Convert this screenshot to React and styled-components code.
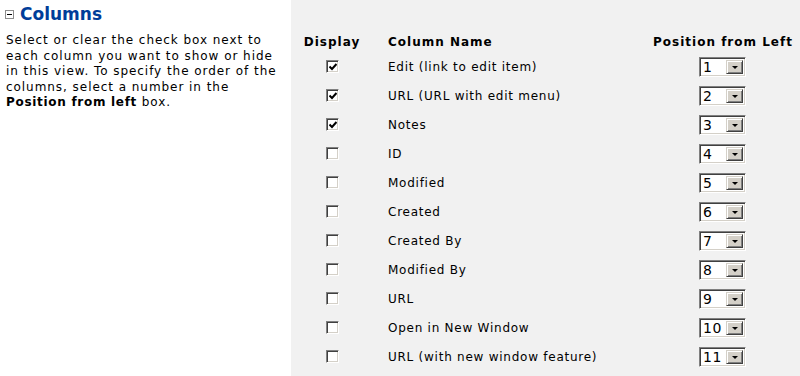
import React from "react";
import styled, { createGlobalStyle } from "styled-components";

const GlobalStyle = createGlobalStyle`
  html, body {
    margin: 0;
    padding: 0;
    background: #ffffff;
  }
  body {
    font-family: "DejaVu Sans", Verdana, sans-serif;
    font-size: 12px;
    color: #000;
  }
`;

const columns = [
  { name: "Edit (link to edit item)", checked: true },
  { name: "URL (URL with edit menu)", checked: true },
  { name: "Notes", checked: true },
  { name: "ID", checked: false },
  { name: "Modified", checked: false },
  { name: "Created", checked: false },
  { name: "Created By", checked: false },
  { name: "Modified By", checked: false },
  { name: "URL", checked: false },
  { name: "Open in New Window", checked: false },
  { name: "URL (with new window feature)", checked: false },
];

const Page = styled.div`
  display: flex;
  width: 800px;
  height: 376px;
  overflow: hidden;
`;

const Side = styled.div`
  width: 285px;
  flex-shrink: 0;
  padding: 4px 0 0 6px;
`;

const Heading = styled.div`
  display: flex;
  align-items: center;
  gap: 6px;
  margin-left: -1px;
  color: #003d99;
  font-size: 17px;
  font-weight: bold;
  line-height: 20px;
`;

const Toggle = styled.span`
  position: relative;
  width: 7px;
  height: 7px;
  border: 1px solid #8c8c8c;
  background: #fff;
  flex-shrink: 0;

  &::after {
    content: "";
    position: absolute;
    left: 1px;
    top: 3px;
    width: 5px;
    height: 1px;
    background: #000;
  }
`;

const Help = styled.p`
  margin: 9px 0 0;
  font-size: 12px;
  line-height: 15.5px;
  letter-spacing: 0.95px;
  white-space: nowrap;

  b {
    font-weight: bold;
    letter-spacing: 0.7px;
  }
`;

const Panel = styled.div`
  flex: 1;
  background: #f1f1f1;
  padding: 35px 7px 0 12px;
`;

const Grid = styled.div`
  display: grid;
  grid-template-columns: 58px 1fr 140px;
  grid-template-rows: 17px;
  column-gap: 27px;
  grid-auto-rows: 29px;
  align-items: center;
`;

const HeadCell = styled.div`
  font-weight: bold;
  letter-spacing: 1px;
  align-self: start;
  line-height: 15px;
  white-space: nowrap;
  text-align: ${(p) => p.$align || "left"};
`;

const Cell = styled.div`
  display: flex;
  justify-content: ${(p) => p.$justify || "flex-start"};
  align-items: center;
  letter-spacing: 0.75px;
  white-space: nowrap;
`;

const Box = styled.span`
  position: relative;
  box-sizing: border-box;
  width: 13px;
  height: 13px;
  background: #fff;
  border-top: 1px solid #808080;
  border-left: 1px solid #808080;
  border-right: 1px solid #fff;
  border-bottom: 1px solid #fff;
  box-shadow: inset 1px 1px 0 #404040, inset -1px -1px 0 #d4d0c8;

  svg {
    position: absolute;
    left: 2px;
    top: 2px;
  }
`;

const Select = styled.div`
  display: flex;
  box-sizing: border-box;
  width: 47px;
  height: 20px;
  margin-left: -1px;
  background: #fff;
  border-top: 1px solid #808080;
  border-left: 1px solid #808080;
  border-right: 1px solid #fff;
  border-bottom: 1px solid #fff;
  box-shadow: inset 1px 1px 0 #404040, inset -1px -1px 0 #d4d0c8;
  padding: 2px;
  font-size: 14px;
  letter-spacing: 0.5px;
`;

const Value = styled.span`
  flex: 1;
  line-height: 14px;
  padding-left: 1px;
`;

const Arrow = styled.span`
  display: flex;
  align-items: center;
  justify-content: center;
  box-sizing: border-box;
  width: 17px;
  height: 14px;
  background: #d4d0c8;
  border-top: 1px solid #d4d0c8;
  border-left: 1px solid #d4d0c8;
  border-right: 1px solid #404040;
  border-bottom: 1px solid #404040;
  box-shadow: inset 1px 1px 0 #fff, inset -1px -1px 0 #808080;

  &::after {
    content: "";
    border-left: 3px solid transparent;
    border-right: 3px solid transparent;
    border-top: 3px solid #000;
    margin-top: 1px;
  }
`;

const Check = () => (
  <svg width="8" height="8" viewBox="0 0 8 8">
    <path d="M0.5 3.5 L3 6 L7.5 1" stroke="#000" strokeWidth="2" fill="none" />
  </svg>
);

export default function App() {
  return (
    <>
      <GlobalStyle />
      <Page>
        <Side>
          <Heading>
            <Toggle />
            Columns
          </Heading>
          <Help>
            Select or clear the check box next to
            <br />
            each column you want to show or hide
            <br />
            in this view. To specify the order of the
            <br />
            columns, select a number in the
            <br />
            <b>Position from left</b> box.
          </Help>
        </Side>
        <Panel>
          <Grid>
            <HeadCell $align="center">Display</HeadCell>
            <HeadCell>Column Name</HeadCell>
            <HeadCell $align="center">Position from Left</HeadCell>
            {columns.map((c, i) => (
              <React.Fragment key={c.name}>
                <Cell $justify="center">
                  <Box>{c.checked && <Check />}</Box>
                </Cell>
                <Cell>{c.name}</Cell>
                <Cell $justify="center">
                  <Select>
                    <Value>{i + 1}</Value>
                    <Arrow />
                  </Select>
                </Cell>
              </React.Fragment>
            ))}
          </Grid>
        </Panel>
      </Page>
    </>
  );
}
